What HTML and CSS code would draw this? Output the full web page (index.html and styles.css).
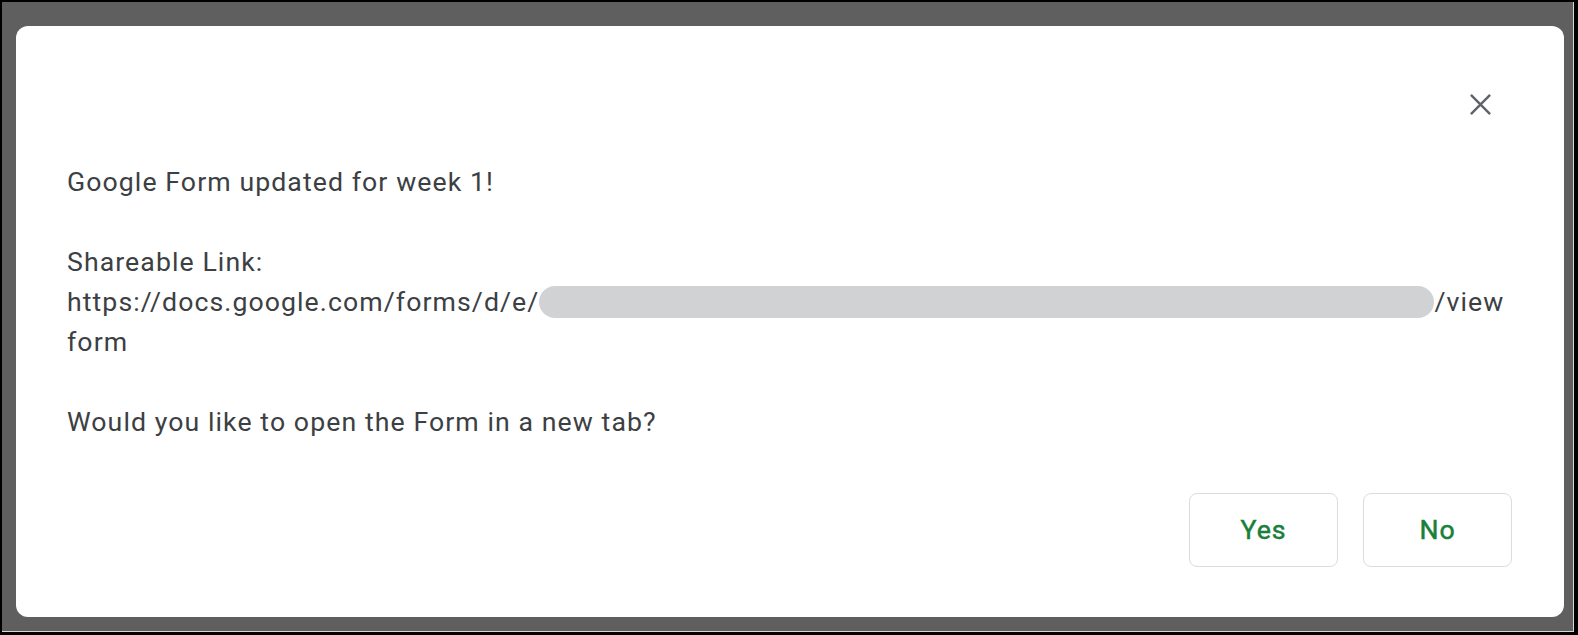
FILE: index.html
```html
<!DOCTYPE html>
<html lang="en">
<head>
<meta charset="utf-8">
<title>Form updated</title>
<link rel="stylesheet" href="styles.css">
</head>
<body>
<div class="screen">
  <div class="backdrop">
    <div class="dialog" role="dialog">
      <div class="dialog-header">
        <button class="close-btn" aria-label="Close">
          <svg viewBox="0 0 24 24" width="24" height="24" aria-hidden="true"><path d="M2 2 L22 22 M22 2 L2 22" stroke="#5f6368" stroke-width="2.5" fill="none"/></svg>
        </button>
      </div>
      <div class="dialog-body">
        <p class="line">Google Form updated for week 1!</p>
        <p class="line blank">&nbsp;</p>
        <p class="line">Shareable Link:</p>
        <p class="line">https://docs.google.com/forms/d/e/<span class="redacted"></span>/view<br>form</p>
        <p class="line blank">&nbsp;</p>
        <p class="line">Would you like to open the Form in a new tab?</p>
      </div>
      <div class="dialog-footer">
        <button class="btn">Yes</button>
        <button class="btn">No</button>
      </div>
    </div>
  </div>
</div>
</body>
</html>
```
FILE: styles.css
```css
html, body {
  margin: 0;
  padding: 0;
  background: #000;
}
.screen {
  width: 1578px;
  height: 635px;
  box-sizing: border-box;
  padding: 2px 4px 3px 2px;
  background: #000;
}
.backdrop {
  height: 100%;
  box-sizing: border-box;
  background: #5f5f5f;
  border-right: 1px solid #d8d8d8;
  border-bottom: 1px solid #d8d8d8;
  padding: 24px 9px 14px 14px;
}
.dialog {
  height: 591px;
  box-sizing: border-box;
  background: #fff;
  border-radius: 12px;
  padding: 0 52px 50px 51px;
  display: flex;
  flex-direction: column;
  font-family: Roboto, "Liberation Sans", Arial, sans-serif;
  color: #3c4043;
}
.dialog-header {
  height: 136px;
  box-sizing: border-box;
  padding-top: 54px;
  display: flex;
  justify-content: flex-end;
  align-items: flex-start;
}
.close-btn {
  width: 48px;
  height: 48px;
  margin-right: 8px;
  padding: 0;
  border: none;
  background: transparent;
  display: flex;
  align-items: center;
  justify-content: center;
}
.close-btn svg {
  width: 23px;
  height: 23px;
}
.dialog-body {
  font-size: 26.67px;
  line-height: 40px;
  letter-spacing: 1.08px;
}
.line {
  margin: 0;
}
.redacted {
  display: inline-block;
  width: 895px;
  height: 32px;
  background: #d1d2d4;
  border-radius: 16px;
  vertical-align: -7px;
}
.dialog-footer {
  margin-top: auto;
  display: flex;
  justify-content: flex-end;
  gap: 25px;
}
.btn {
  width: 149px;
  height: 74px;
  box-sizing: border-box;
  background: #fff;
  border: 1px solid #dadce0;
  border-radius: 8px;
  color: #188038;
  font-family: Roboto, "Liberation Sans", Arial, sans-serif;
  font-size: 26.67px;
  font-weight: 400;
  -webkit-text-stroke: 0.5px #188038;
  letter-spacing: 0.9px;
  padding: 0;
}
```
